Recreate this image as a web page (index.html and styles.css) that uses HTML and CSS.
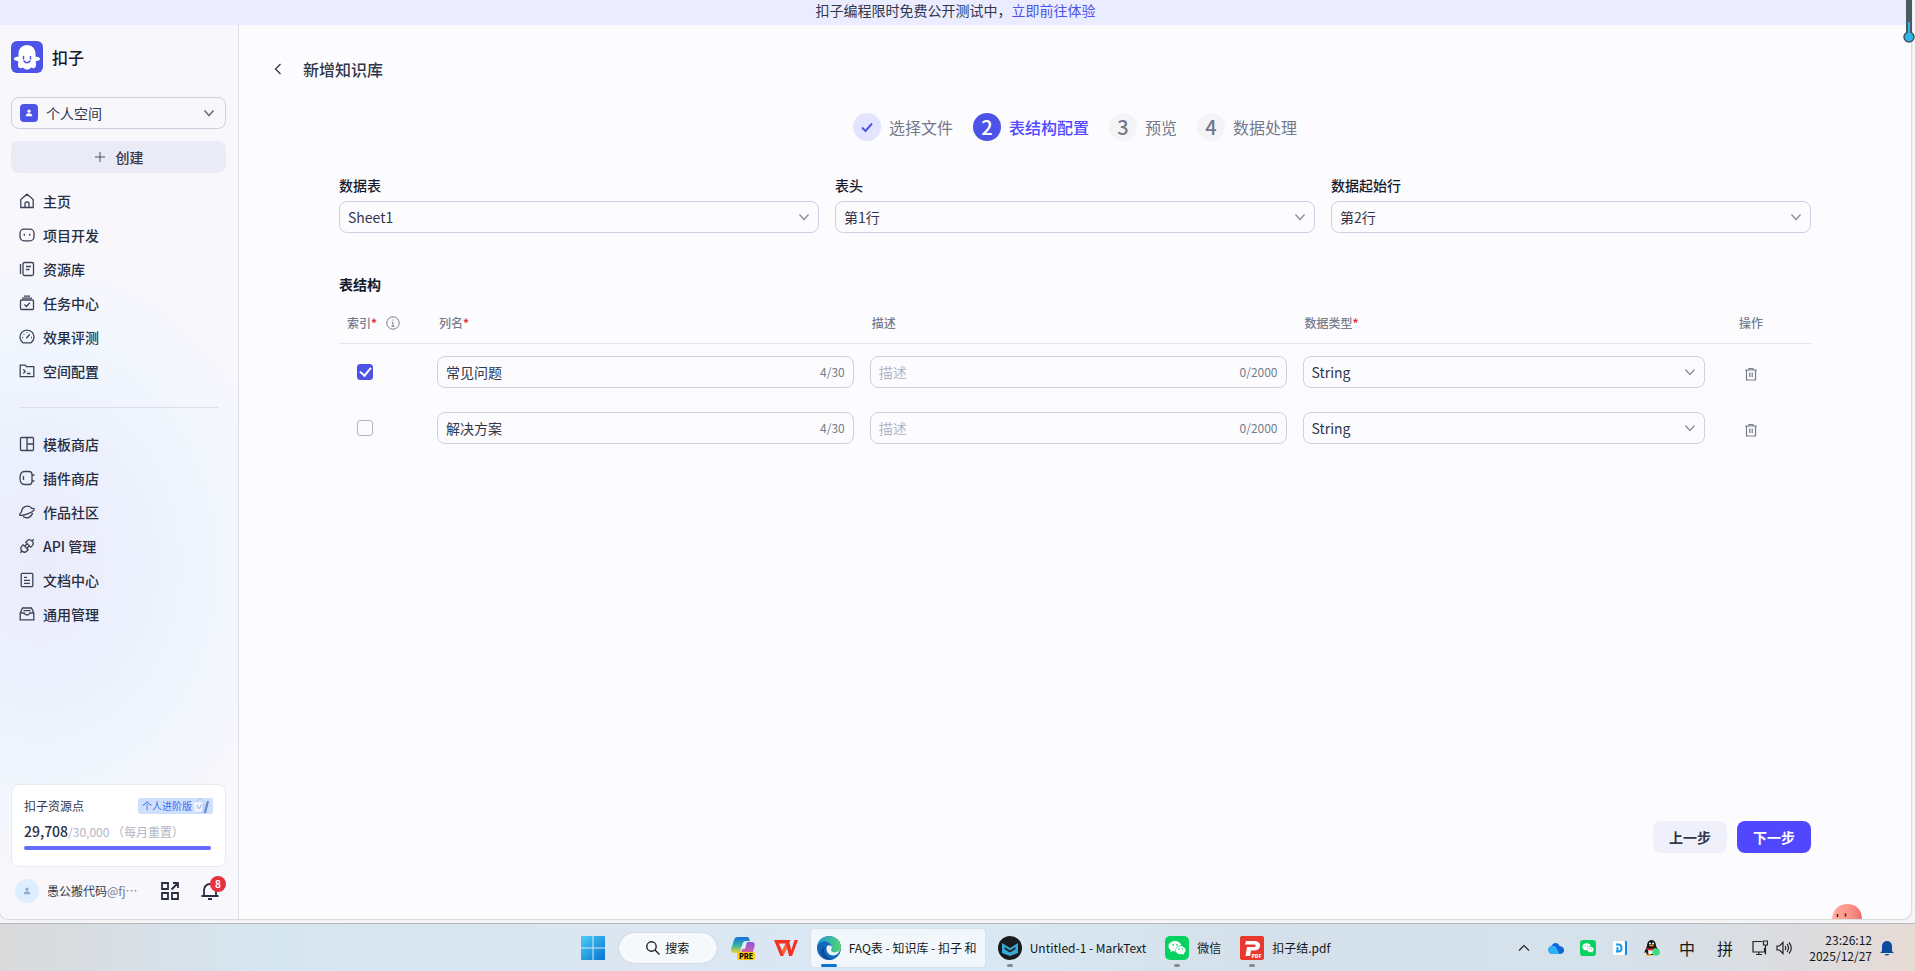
FILE: index.html
```html
<!DOCTYPE html>
<html lang="zh-CN">
<head>
  <meta charset="UTF-8" />
  <meta name="viewport" content="width=device-width, initial-scale=1.0" />
  <title>扣子 - 新增知识库</title>
  <link rel="stylesheet" href="styles.css">
</head>
<body>
  <svg class="sprite" aria-hidden="true">
    <symbol id="chevron" viewBox="0 0 12 12"><path d="M1.500 3.500 6 8.500l4.500-5" /></symbol>
    <symbol id="trash" viewBox="0 0 14 14"><path d="M1 3h12M5 3V1.500h4V3M2.500 3v10h9V3M5.800 5.500v4.500M8.200 5.500v4.500" /></symbol>
    <symbol id="person" viewBox="0 0 16 16"><circle cx="8" cy="5" r="2.600" /><path d="M2.800 13c0-3 2-4.500 5.200-4.500s5.200 1.500 5.200 4.500z" /></symbol>
    <symbol id="wechat" viewBox="0 0 24 24">
      <rect width="24" height="24" rx="5" fill="#07d15f" />
      <path d="M10 5c-3.700 0-6.500 2.300-6.500 5.200 0 1.700.9 3.100 2.400 4.100l-.6 2 2.300-1.200c.8.200 1.600.4 2.400.4l.6-.1c-.7-3.300 2.200-6 5.800-5.900C15.700 6.800 13.100 5 10 5z" fill="#fff" />
      <path d="M20.500 14.200c0-2.300-2.200-4-4.900-4s-4.900 1.700-4.900 4 2.200 4.100 4.900 4.100c.6 0 1.200-.1 1.800-.3l1.700.9-.4-1.500c1.100-.8 1.800-1.900 1.800-3.200z" fill="#fff" />
      <g fill="#07d15f"><circle cx="8" cy="8.800" r=".9" /><circle cx="12" cy="8.800" r=".9" /><circle cx="14" cy="13" r=".8" /><circle cx="17.200" cy="13" r=".8" /></g>
    </symbol>
  </svg>

  <div class="browser">
    <div class="window">
      <div class="banner">扣子编程限时免费公开测试中，<a href="#">立即前往体验</a></div>

      <div class="page">
        <aside class="sidebar">
          <div class="brand">
            <svg class="logo" viewBox="0 0 32 32">
              <rect width="32" height="32" rx="6" fill="#4e53e8" />
              <path d="M16 4c-5 0-8.500 3.800-8.500 8.500v3.200c-1.500-.2-3.200.2-4.200 1.200-.7.800-.4 1.900.7 2.300l3.500 1.300c-.8 2.500-.7 4.800.3 5.900 1.300 1.200 3 .8 4.200 0 1 1.400 2.500 2 4 2s3-.6 4-2c1.200.8 2.900 1.200 4.200 0 1-1.100 1.100-3.400.3-5.900l3.500-1.300c1.100-.4 1.400-1.500.7-2.300-1-1-2.700-1.400-4.200-1.200v-3.200C24.500 7.800 21 4 16 4z" fill="#fff" />
              <path d="M12.500 15.500v2.500M19.500 15.500v2.500M13 20c1.500 2.200 4.500 2.200 6 0" fill="none" stroke="#4e53e8" stroke-width="1.500" stroke-linecap="round" />
            </svg>
            <span>扣子</span>
          </div>

          <button class="space">
            <span class="space-icon"><svg><use href="#person" /></svg></span>
            <span>个人空间</span>
            <svg class="line-icon"><use href="#chevron" /></svg>
          </button>
          <button class="create">
            <svg viewBox="0 0 12 12"><path d="M6 1v10M1 6h10" /></svg>
            创建
          </button>

          <nav class="nav">
            <a href="#"><svg viewBox="0 0 16 16"><path d="M1.800 6.500 8 1.200l6.200 5.300v8H1.800zM6 14.500V10.300q0-1.300 2-1.300t2 1.300v4.200" /></svg>主页</a>
            <a href="#"><svg viewBox="0 0 16 16"><rect x="1" y="2.200" width="14" height="11.600" rx="4" /><path d="M5.300 6.800v2M10.700 6.800v2" /></svg>项目开发</a>
            <a href="#"><svg viewBox="0 0 16 16"><rect x="4" y="1.500" width="10.500" height="13" rx="1.500" /><path d="M1.500 3v10M7 5.500h5M7 8.500h3.500" /></svg>资源库</a>
            <a href="#"><svg viewBox="0 0 16 16"><rect x="1.500" y="5" width="13" height="9.500" rx="1" /><path d="M3 3.200h10M5 1.200h6M5.500 9.500l2 2 3.300-3.700" /></svg>任务中心</a>
            <a href="#"><svg viewBox="0 0 16 16"><path d="M4 13.800A7 7 0 1 1 12 13.800zM7.300 9.300l3.500-4M8 3v.8M3.300 8.500h.9M12 8.500h.9M4.700 5l.6.600" /></svg>效果评测</a>
            <a href="#"><svg viewBox="0 0 16 16"><path d="M1.200 2.200h5l1.300 1.500h7.300v10H1.200zM4.300 6.500l2 2-2 2M8 10.500h3.500" /></svg>空间配置</a>
          </nav>
          <hr />
          <nav class="nav">
            <a href="#"><svg viewBox="0 0 16 16"><rect x="1.500" y="1.500" width="13" height="13" rx="1" /><path d="M8 1.500v13M8 8h6.500" /></svg>模板商店</a>
            <a href="#"><svg viewBox="0 0 16 16"><path d="M5.500 1.500H10q3 0 3 3v7q0 3-3 3H5.500Q1 14.500 1 8t4.500-6.500zM4.500 6v4M13 5h2.500M13 11h2.500" /></svg>插件商店</a>
            <a href="#"><svg viewBox="0 0 16 16"><path d="M2.500 8A5.800 5.800 0 0 1 13 4.600M13.500 8.800a6 6 0 0 1-9.500 3.700M2.500 8C.5 9.500.3 11 1.200 11.300 4 12 15 8 15.200 5.200 15.200 4.400 14 4.300 13 4.600" /></svg>作品社区</a>
            <a href="#"><svg viewBox="0 0 16 16"><g transform="rotate(45 8 8)"><path d="M4.500 6.200V4q0-3 3.500-3t3.500 3v2.200zM4.500 9.800V12q0 3 3.500 3t3.500-3V9.800zM6.500 6.200v3.600M9.500 6.200v3.600M8 1v-2.500M8 15v2.500" /></g></svg>API 管理</a>
            <a href="#"><svg viewBox="0 0 16 16"><rect x="2.200" y="1.300" width="11.600" height="13.400" rx="1" /><path d="M5 5.300h3M5 8.300h6M5 11.300h6" /></svg>文档中心</a>
            <a href="#"><svg viewBox="0 0 16 16"><path d="M1.200 7 3.500 2h9L14.800 7v6.800H1.200zM1.200 7h4c.5 1.300 1.400 2 2.800 2s2.300-.7 2.800-2h4M4.500 4.700h7" /></svg>通用管理</a>
          </nav>

          <div class="quota">
            <div class="quota-head">
              <span>扣子资源点</span>
              <span class="plan">个人进阶版
                <svg viewBox="0 0 18 18"><path d="M2 6h13l-2 10H4z" fill="#bcd0f5" /><path d="M1 5h10l-1 10H3z" fill="#eef3fd" /><path d="m5 5 3-4 4 4" fill="none" stroke="#a8c6f4" /><path d="m5 8 2 4 3-5" fill="none" stroke="#96b7ee" /><path d="m16 4-3 12" stroke="#6b86c9" stroke-width="2" /></svg>
              </span>
            </div>
            <div class="quota-num"><strong>29,708</strong>/30,000 （每月重置）</div>
            <div class="quota-bar"></div>
          </div>

          <div class="user">
            <span class="avatar"><svg><use href="#person" /></svg></span>
            <span class="user-name">愚公搬代码<i>@fj⋯</i></span>
            <button class="tool" aria-label="应用"><svg viewBox="0 0 20 20"><path d="M2 2h6v6H2zM2 12h6v6H2zM12 12h6v6h-6zM11.500 8.500 18 2M13 2h5v5" /></svg></button>
            <button class="tool" aria-label="通知"><svg viewBox="0 0 20 20"><path d="M4 15V9a6 6 0 0 1 12 0v6M1.500 15h17M8 18h4" /></svg><b class="count">8</b></button>
          </div>
        </aside>

        <main class="content">
          <header class="head">
            <button aria-label="返回"><svg class="line-icon" viewBox="0 0 12 12"><path d="M8.500 1 3.500 6l5 5" /></svg></button>
            <h1>新增知识库</h1>
          </header>

          <ol class="steps">
            <li class="done"><b><svg viewBox="0 0 14 14"><path d="m2 7.500 3.500 3.500L12 3.500" /></svg></b>选择文件</li>
            <li class="active"><b>2</b>表结构配置</li>
            <li><b>3</b>预览</li>
            <li><b>4</b>数据处理</li>
          </ol>

          <form class="config">
            <div class="fields">
              <div class="field">
                <label for="sheet">数据表</label>
                <div class="select"><select id="sheet"><option>Sheet1</option></select><svg class="line-icon"><use href="#chevron" /></svg></div>
              </div>
              <div class="field">
                <label for="headRow">表头</label>
                <div class="select"><select id="headRow"><option>第1行</option></select><svg class="line-icon"><use href="#chevron" /></svg></div>
              </div>
              <div class="field">
                <label for="startRow">数据起始行</label>
                <div class="select"><select id="startRow"><option>第2行</option></select><svg class="line-icon"><use href="#chevron" /></svg></div>
              </div>
            </div>

            <h2>表结构</h2>
            <table class="columns">
              <colgroup><col class="col-index"><col class="col-text"><col class="col-text"><col><col class="col-action"></colgroup>
              <thead>
                <tr>
                  <th><span class="index-head"><span>索引<em>*</em></span><svg viewBox="0 0 14 14"><circle cx="7" cy="7" r="6.200" /><path d="M5.800 6.300H7v4M5.500 10.300h3M7 3.500v1.200" /></svg></span></th>
                  <th>列名<em>*</em></th>
                  <th>描述</th>
                  <th>数据类型<em>*</em></th>
                  <th>操作</th>
                </tr>
              </thead>
              <tbody>
                <tr>
                  <td><input type="checkbox" aria-label="索引 常见问题" checked></td>
                  <td><div class="text"><input type="text" aria-label="列名" value="常见问题"><span>4/30</span></div></td>
                  <td><div class="text"><input type="text" aria-label="描述" placeholder="描述"><span>0/2000</span></div></td>
                  <td><div class="select"><select aria-label="数据类型"><option>String</option></select><svg class="line-icon"><use href="#chevron" /></svg></div></td>
                  <td><button type="button" aria-label="删除"><svg><use href="#trash" /></svg></button></td>
                </tr>
                <tr>
                  <td><input type="checkbox" aria-label="索引 解决方案"></td>
                  <td><div class="text"><input type="text" aria-label="列名" value="解决方案"><span>4/30</span></div></td>
                  <td><div class="text"><input type="text" aria-label="描述" placeholder="描述"><span>0/2000</span></div></td>
                  <td><div class="select"><select aria-label="数据类型"><option>String</option></select><svg class="line-icon"><use href="#chevron" /></svg></div></td>
                  <td><button type="button" aria-label="删除"><svg><use href="#trash" /></svg></button></td>
                </tr>
              </tbody>
            </table>

            <div class="actions">
              <button type="button" class="btn">上一步</button>
              <button type="button" class="btn primary">下一步</button>
            </div>
          </form>
        </main>
      </div>

      <svg class="mascot" viewBox="0 0 30 15">
        <defs><linearGradient id="skin"><stop offset="0" stop-color="#ffae9c" /><stop offset=".6" stop-color="#fb9388" /><stop offset="1" stop-color="#e97070" /></linearGradient></defs>
        <path d="M0 15C1 5 7 0 15.500 0S30 6 30 15z" fill="url(#skin)" />
        <path d="M5.500 10v3M13.500 9.500v3" stroke="#3b2226" stroke-width="1.500" />
      </svg>
    </div>
    <svg class="thermo" viewBox="0 0 12 44"><path d="M6 0v37" stroke="#4b5963" stroke-width="6" /><circle cx="6" cy="37" r="5" fill="#2db5ea" stroke="#46535c" stroke-width="1.500" /><path d="M6 22v15" stroke="#2db5ea" stroke-width="2" /></svg>
  </div>

  <footer class="taskbar">
    <div class="apps">
      <button class="app" aria-label="开始"><svg viewBox="0 0 24 24"><defs><linearGradient id="win" x2="1" y2="1"><stop offset="0" stop-color="#4ccdfa" /><stop offset="1" stop-color="#0673cc" /></linearGradient></defs><path d="M1 0h10.500v11.500H0V1q0-1 1-1zM12.500 0H23q1 0 1 1v10.500H12.500zM0 12.500h11.500V24H1q-1 0-1-1zM12.500 12.500H24V23q0 1-1 1H12.500z" fill="url(#win)" /></svg></button>
      <button class="search"><svg viewBox="0 0 14 14"><circle cx="5.500" cy="5.500" r="4.700" /><path d="m9 9 4.500 4.500" /></svg>搜索</button>
      <button class="app" aria-label="Copilot">
        <svg viewBox="0 0 24 24">
          <defs><linearGradient id="copA" x2="0" y2="1"><stop offset="0" stop-color="#1b6cdc" /><stop offset=".5" stop-color="#2bb3a8" /><stop offset="1" stop-color="#f4d22f" /></linearGradient><linearGradient id="copB" x2="0" y2="1"><stop offset="0" stop-color="#8559e6" /><stop offset="1" stop-color="#f0628d" /></linearGradient></defs>
          <path d="M7 1h9c2 0 2.500 2 3 4h-4c-2 0-3 1-3.500 3L9 17H3c-2.500 0-3.500-2-2.700-4.500L3 4c.6-2 2-3 4-3z" fill="url(#copA)" />
          <path d="M14 6h7c2.500 0 3.200 2 2.500 4.500L21 19h-9l-2-2z" fill="url(#copB)" />
          <path d="M13 6h3l-2 7H9.500z" fill="#dcecf7" />
          <rect x="6" y="16" width="18" height="8" rx="2" fill="#fdc912" /><text x="15" y="22.500" class="pre">PRE</text>
        </svg>
      </button>
      <button class="app" aria-label="WPS"><svg viewBox="0 0 24 24"><path d="M0 4h16.500l-1.500 3.500H5L8 15l4-8h3.500l1.700 7.500L20.500 4H24l-6 16h-3l-2-8-4 8H6.500z" fill="#f6301f" /><path d="m12 7-4 8 1 5 4-8z" fill="#ff6a3c" /></svg></button>
      <button class="app current">
        <svg viewBox="0 0 24 24"><defs><linearGradient id="edgeA" x2="1"><stop offset="0" stop-color="#1997df" /><stop offset="1" stop-color="#58d66f" /></linearGradient></defs><circle cx="12" cy="12" r="12" fill="#1268b8" /><path d="M.3 10C2-2.500 22-3.500 24 10.500c.5 5-4 7-8 6-2.500-.7-2-2-1.200-3C17 9 7-.500.3 10z" fill="url(#edgeA)" /><path d="M10 10c1.500-1.500 5-1 5 1.800 0 1.200-1.500 2-.5 3.400 1.500 2 6.500 1.200 8.300-1.200-.5 3-3.300 5.500-6.800 5.500-4.500 0-8-5-6-9.500z" fill="#e8f3fa" /><path d="M8 11c-3 5 2 12.500 8 12-9 2.500-14-5-11-10 1-1.500 2-2 3-2z" fill="#0c4c96" /></svg>
        <span>FAQ表 - 知识库 - 扣子 和</span>
      </button>
      <button class="app running">
        <svg viewBox="0 0 24 24"><circle cx="12" cy="12" r="12" fill="#191c1f" /><path d="m4 7 8 5 8-5v10l-8 3-8-3z" fill="#38a9d4" /><path d="m6.500 11 5.500 3.500 5.500-3.500v2L12 16.500 6.500 13z" fill="#191c1f" /></svg>
        <span>Untitled-1 - MarkText</span>
      </button>
      <button class="app running"><svg><use href="#wechat" /></svg><span>微信</span></button>
      <button class="app running">
        <svg viewBox="0 0 24 24"><rect width="24" height="24" rx="2" fill="#e9392f" /><path d="M6 5h9c7 0 6.500 9.500 0 9.500h-4L10 20H5.500L7 11h7.500c1.500 0 1.700-2.500 0-2.500H5z" fill="#fff" /><text x="16.500" y="21.500" class="pdf">PDF</text></svg>
        <span>扣子结.pdf</span>
      </button>
    </div>

    <div class="tray">
      <svg class="line" viewBox="0 0 16 16"><path d="m3 10.500 5-5 5 5" /></svg>
      <svg viewBox="0 0 16 16"><path d="M3.500 6C5 1.800 10.500 2 11.500 6c6 .5 6 8 .5 8H4C-.5 14-1 7 3.500 6z" fill="#0f65d8" /><path d="M3.500 6c2-.5 4 .5 5 2l3 6H4C-.5 14-1 7 3.500 6z" fill="#2bb3f5" /></svg>
      <svg><use href="#wechat" /></svg>
      <svg viewBox="0 0 16 16"><rect x="3" y="1" width="12" height="14" rx="1" fill="#1689f0" /><rect x="1" y="1" width="12" height="14" rx="1" fill="#fff" /><path d="M4 4.500h2.500c4 0 4 7 0 7H4M5.500 7v4" fill="none" stroke="#1a9bea" stroke-width="2" /></svg>
      <svg viewBox="0 0 16 16"><path d="M3 6c0-8 9-8 9 0l3 5-2 1-1 3H3l-1-3-2 1z" fill="#171717" /><path d="M4 9h7l-.5 5h-6z" fill="#fff" /><path d="M2.500 7.500q5 2.500 9.500 0v2q-5 2-9.500 0z" fill="#ec1c24" /><path d="M2 15h5M5.500 5.500h4" stroke="#f8a51b" stroke-width="1.500" /><circle cx="6" cy="3.500" r="1" fill="#fff" /><circle cx="9" cy="3.500" r="1" fill="#fff" /><circle cx="12" cy="12" r="3.800" fill="#3ddc84" /></svg>
      <span class="ime">中</span>
      <span class="ime">拼</span>
      <span class="system">
        <svg class="line" viewBox="0 0 16 16"><path d="M10.500 1.500H1v10.500h11.500V8M4 14.500h6M6.800 12v2.500M11.500 1h4v4h-4zM13.500 5v9.500" /></svg>
        <svg class="line" viewBox="0 0 16 16"><path d="M1 6h2.500L7 2.500v11L3.500 10H1zM9 6q1.500 2 0 4M11 4.200q3 3.800 0 7.600M13 2.500q4.500 5.500 0 11" /></svg>
      </span>
      <time>23:26:12<br>2025/12/27</time>
      <svg class="bell" viewBox="0 0 16 16"><path d="M3 11V6a5 5 0 0 1 10 0v5l2 2H1zM5.500 14h5q-2.500 3-5 0z" fill="#0b4a9c" /></svg>
    </div>
  </footer>
</body>
</html>
```
FILE: styles.css
```css
* { box-sizing: border-box; }
body {
  margin: 0;
  min-height: 100vh;
  display: flex; flex-direction: column;
  background: #f6f6f8;
  color: #32374b;
  font: 14px/20px "Noto Sans CJK SC", "Noto Sans", sans-serif;
}
button, input, select { font: inherit; color: inherit; }
button { border: none; background: none; padding: 0; cursor: pointer; }
a { color: inherit; text-decoration: none; }
svg { flex: none; display: block; }
.sprite { position: absolute; width: 0; height: 0; }
.line-icon {
  width: 12px; height: 12px;
  fill: none; stroke: #85899a; stroke-width: 1.2;
}

.browser {
  flex: 1;
  display: flex;
  padding: 0 4px 4px 0;
  position: relative;
}
.window {
  flex: 1;
  display: flex; flex-direction: column;
  position: relative;
  overflow: hidden;
  background: #fcfcff;
  border-radius: 0 0 8px 8px;
  box-shadow: 0 0 2px rgba(0, 0, 0, 0.4);
}
.banner {
  height: 25px;
  line-height: 20px;
  text-align: center;
  background: #ebecff;
}
.banner a { color: #4e53e8; }
.page { flex: 1; display: flex; }

/* sidebar */
.sidebar {
  width: 239px;
  flex: none;
  display: flex; flex-direction: column;
  padding: 16px 12px 16px 11px;
  border-right: 1px solid #dfe0ec;
  background: radial-gradient(ellipse 250px 310px at 40px 540px, #ebecfb 0%, #ecf0fc 40%, #f1f6fe 70%, #f7f7fc 100%);
}
.brand {
  display: flex; align-items: center;
  gap: 9px;
  margin-bottom: 24px;
  font-size: 16px; font-weight: 500;
  color: #15192b;
}
.logo { width: 32px; height: 32px; }
.space {
  display: flex; align-items: center;
  gap: 8px;
  height: 32px;
  padding: 0 10px 0 8px;
  border: 1px solid #cfcfe2; border-radius: 8px;
}
.space-icon {
  display: grid; place-items: center;
  width: 18px; height: 18px;
  border-radius: 4px;
  background: #4e53e8;
}
.space-icon svg { width: 10px; height: 10px; fill: #fff; }
.space .line-icon { margin-left: auto; stroke: #6b7086; stroke-width: 1.6; }
.create {
  display: flex; align-items: center; justify-content: center;
  gap: 10px;
  height: 32px;
  margin: 12px 0 11px;
  border-radius: 8px;
  background: #ebebf5;
  font-weight: 500;
}
.create svg { width: 12px; height: 12px; stroke: #4d5266; }
.nav a {
  display: flex; align-items: center;
  gap: 8px;
  height: 34px;
  padding-left: 8px;
  font-weight: 500;
  color: #282d42;
}
.nav svg { width: 16px; height: 16px; fill: none; stroke: #3d4257; stroke-width: 1.3; }
.sidebar hr {
  width: 199px; height: 1px;
  margin: 19px 8px;
  border: none;
  background: #dcdeec;
}
.quota {
  margin-top: auto;
  padding: 12px 12px 16px;
  border: 1px solid #e9e9f2; border-radius: 8px;
  background: #fff;
  font-size: 12px;
}
.quota-head {
  display: flex; align-items: center; justify-content: space-between;
  height: 18px;
}
.plan {
  display: flex; align-items: center;
  width: 75px; height: 16px;
  padding-left: 4px;
  border-radius: 2px;
  background: #cfe0fd;
  color: #3370f0;
  font-size: 10px;
}
.plan svg { width: 18px; height: 18px; }
.quota-num {
  margin: 6px 0 4px;
  color: #b3b5c6;
  white-space: nowrap;
}
.quota-num strong { font-size: 14px; font-weight: 500; color: #2a2f45; }
.quota-bar { width: 187px; height: 4px; border-radius: 2px; background: #646bff; }
.user {
  display: flex; align-items: center;
  height: 24px;
  margin-top: 12px;
  padding-left: 4px;
  font-size: 12px;
}
.avatar {
  display: grid; place-items: center;
  width: 24px; height: 24px;
  border-radius: 50%;
  background: #dceeff;
}
.avatar svg { width: 10px; height: 10px; fill: #8fa9d2; }
.user-name { margin-left: 8px; white-space: nowrap; }
.user-name i { font-style: normal; color: #777b8c; }
.tool { position: relative; margin-left: 20px; }
.user-name + .tool { margin-left: auto; }
.user .tool:last-child { margin-right: 6px; }
.tool svg { width: 20px; height: 20px; fill: none; stroke: #2a2f45; stroke-width: 1.8; }
.count {
  position: absolute; top: -5px; right: -6px;
  width: 16px; height: 16px;
  border-radius: 50%;
  background: #e5323e; color: #fff;
  font-size: 10px; line-height: 16px;
}

/* main */
.content {
  flex: 1;
  display: flex; flex-direction: column;
  padding-top: 32px;
}
.head {
  display: flex; align-items: center;
  gap: 19px;
  padding-left: 33px;
}
.head .line-icon { stroke: #2a2f45; }
.head h1 { margin: 0; font-size: 16px; line-height: 24px; font-weight: 500; }
.steps {
  display: flex; justify-content: center;
  gap: 20px;
  margin: 32px 0 34px;
  padding: 0;
  list-style: none;
  font-size: 16px; line-height: 28px;
  color: #74788b;
}
.steps li { display: flex; gap: 8px; }
.steps b {
  display: grid; place-items: center;
  width: 28px; height: 28px;
  border-radius: 50%;
  background: #f4f4f7;
  font-size: 20px; font-weight: 500;
}
.steps .done b { background: #e3e4ff; }
.steps .done svg { width: 14px; height: 14px; fill: none; stroke: #4e53e8; stroke-width: 2; }
.steps .active { color: #5147ff; font-weight: 500; }
.steps .active b { background: #4e53e8; color: #fff; }

.config {
  flex: 1;
  display: flex; flex-direction: column;
  padding: 0 100px 66px;
}
.fields { display: flex; gap: 16px; }
.field { flex: 1; }
.field label { display: block; margin-bottom: 6px; font-weight: 500; color: #15192b; }
.select, .text {
  display: flex; align-items: center;
  position: relative;
  height: 32px;
  border: 1px solid #cfcfe2; border-radius: 8px;
}
.select select {
  appearance: none;
  width: 100%; height: 100%;
  padding: 0 28px 0 8px;
  border: none; background: none;
}
.select .line-icon { position: absolute; right: 8px; pointer-events: none; }
.text { padding: 0 8px; }
.text input {
  flex: 1;
  min-width: 0; height: 100%;
  padding: 0;
  border: none; background: none;
}
.text input::placeholder { color: #b3b5c6; }
.text span { font-size: 12px; color: #777b8c; }

.config h2 {
  margin: 41px 0 10px;
  font-size: 14px; line-height: 20px;
  color: #15192b;
}
.columns { width: 100%; table-layout: fixed; border-collapse: collapse; }
.col-index { width: 90px; }
.col-text { width: 29.4%; }
.col-action { width: 98px; }
.columns th {
  height: 39px;
  padding: 0 10px;
  border-bottom: 1px solid #e4e4ea;
  font-size: 12px; font-weight: 500;
  text-align: left;
  color: #777b8c;
}
.columns th:first-child { padding: 0 8px; }
.columns em { font-style: normal; font-weight: 700; color: #e5323e; }
.index-head { display: flex; align-items: center; gap: 9px; }
.index-head svg { width: 14px; height: 14px; fill: none; stroke: #777b8c; }
.columns td { padding: 12px 8px; }
.columns td:first-child { padding-left: 18px; }
.columns th:last-child, .columns td:last-child { padding-left: 26px; }
.columns td button { display: block; margin: 4px 5px 0; }
.columns td button svg { width: 14px; height: 14px; fill: none; stroke: #777b8c; stroke-width: 1.2; }
.columns input[type="checkbox"] {
  appearance: none;
  display: grid; place-items: center;
  width: 16px; height: 16px;
  margin: 0;
  border: 1px solid #b3b5c6; border-radius: 3px;
}
.columns input[type="checkbox"]:checked { border-color: #4e53e8; background: #4e53e8; }
.columns input[type="checkbox"]:checked::after {
  content: "";
  width: 5px; height: 9px;
  margin-bottom: 2px;
  border: solid #fff;
  border-width: 0 2px 2px 0;
  transform: rotate(40deg);
}
.actions {
  display: flex; justify-content: flex-end;
  gap: 10px;
  margin-top: auto;
}
.btn {
  height: 32px;
  padding: 0 16px;
  border-radius: 8px;
  background: #f0f0fa;
  font-weight: 700;
}
.btn.primary { background: #5147ff; color: #fff; }

.mascot { position: absolute; right: 49px; bottom: 0; width: 30px; height: 15px; }
.thermo { position: absolute; right: 0; top: 0; width: 12px; height: 44px; }

/* taskbar */
.taskbar {
  display: flex; align-items: center; justify-content: center;
  position: relative;
  height: 48px;
  padding-right: 4px;
  border-top: 1px solid #b4b8be;
  background: linear-gradient(90deg, #d9d9da, #d6e6f1 14%, #dbe6f1 33%, #d9e9f4 50%, #d4e0ea 66%, #d5e2ec 83%, #dcdcdf 94%, #e8dbd5);
  color: #15171a;
  font-size: 12px;
}
.apps { display: flex; align-items: center; gap: 7px; }
.app {
  display: flex; align-items: center;
  gap: 8px;
  height: 38px;
  padding: 0 6px;
  position: relative;
  border-radius: 4px;
  white-space: nowrap;
}
.app svg { width: 24px; height: 24px; }
.current {
  width: 174px;
  background: rgba(248, 250, 254, 0.8);
  box-shadow: 0 0 1px rgba(0, 0, 0, 0.2);
}
.current::after, .running::after {
  content: "";
  position: absolute; bottom: 0; left: 15px;
  width: 6px; height: 3px;
  border-radius: 2px;
  background: #858b91;
}
.current::after { left: 10px; width: 16px; background: #0b75cf; }
.search {
  display: flex; align-items: center; justify-content: center;
  gap: 5px;
  width: 98px; height: 30px;
  margin: 0 1px;
  border-radius: 15px;
  background: #f6f9fc;
  box-shadow: 0 0 1px rgba(0, 0, 0, 0.3);
}
.search svg { width: 14px; height: 14px; fill: none; stroke: #222; stroke-width: 1.4; }
.pre, .pdf { font-size: 7px; font-weight: 900; text-anchor: middle; }
.pdf { font-size: 5px; fill: #fff; }
.tray {
  display: flex; align-items: center;
  gap: 16px;
  position: absolute; right: 20px; top: 0;
  height: 47px;
}
.tray svg { width: 16px; height: 16px; }
.tray .line { fill: none; stroke: #222; stroke-width: 1.2; }
.ime { width: 22px; font-size: 16px; text-align: center; }
.system { display: flex; gap: 8px; }
.tray time { width: 64px; line-height: 16px; text-align: right; white-space: nowrap; }
.tray .bell { margin-left: -9px; }
```
